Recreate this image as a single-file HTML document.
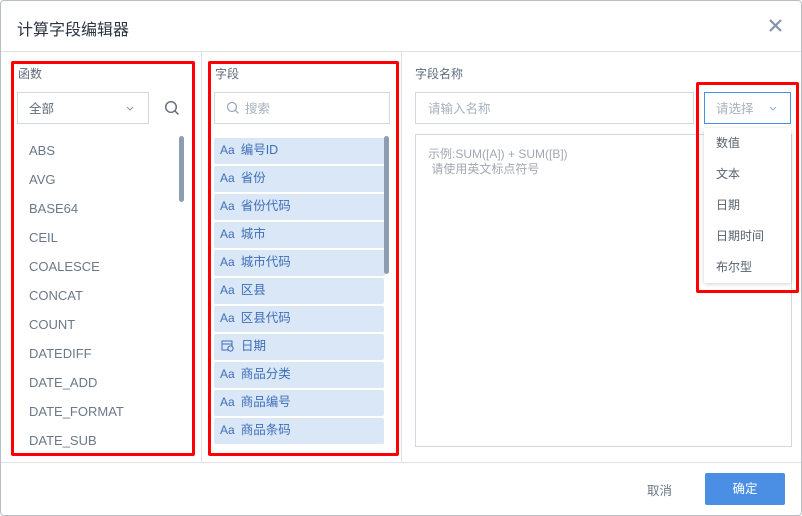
<!DOCTYPE html>
<html><head><meta charset="utf-8"><style>
*{box-sizing:border-box;margin:0;padding:0}
body{width:802px;height:516px;background:#fff;font-family:"Liberation Sans","Noto Sans CJK SC",sans-serif;position:relative;overflow:hidden;color:#5f6b7a}
.a{position:absolute}
.box{position:absolute;border:1px solid #d3d8e0;background:#fff}
.red{position:absolute;border:3px solid #f00;border-radius:2px}
.fn{position:absolute;left:29px;font-size:13px;color:#6b7889}
.fd{position:absolute;left:214px;height:26px;background:#d9e7f7;border-radius:2px;font-size:12.5px;color:#3f6fb8;line-height:25px;padding-left:6px}
.fd b{font-weight:normal;margin-right:6px;font-size:12px}
.opt{position:absolute;left:716px;font-size:12px;color:#56626f}
</style></head><body>
<div class="a" style="left:0;top:0;width:802px;height:516px;border:1px solid #b9bec6;border-radius:4px"></div>
<div class="a" style="left:17px;top:16px;font-size:16px;color:#2c3440">计算字段编辑器</div>
<svg class="a" style="left:768px;top:18px" width="15" height="15"><path d="M2 2L13 13M13 2L2 13" stroke="#8494a8" stroke-width="2.2"/></svg>
<div class="a" style="left:1px;top:51px;width:800px;height:1px;background:#dde1e7"></div>
<div class="a" style="left:201px;top:52px;width:1px;height:410px;background:#dde1e7"></div>
<div class="a" style="left:401px;top:52px;width:1px;height:410px;background:#dde1e7"></div>
<div class="a" style="left:1px;top:462px;width:800px;height:1px;background:#dde1e7"></div>

<div class="a" style="left:18px;top:65px;font-size:12px;color:#5f6b7a">函数</div>
<div class="box" style="left:17px;top:92px;width:132px;height:32px"></div>
<div class="a" style="left:29px;top:98px;font-size:12.5px;color:#5f6b7a">全部</div>
<svg class="a" style="left:126px;top:106px" width="8" height="6"><path d="M1 1L4 4L7 1" stroke="#8a96a5" fill="none"/></svg>
<svg class="a" style="left:164px;top:100px" width="16" height="16"><circle cx="7" cy="7" r="5.3" stroke="#5f6b7a" stroke-width="1.4" fill="none"/><path d="M11 11L14.5 14.5" stroke="#5f6b7a" stroke-width="1.5"/></svg>
<div class="fn" style="top:143px">ABS</div>
<div class="fn" style="top:172px">AVG</div>
<div class="fn" style="top:201px">BASE64</div>
<div class="fn" style="top:230px">CEIL</div>
<div class="fn" style="top:259px">COALESCE</div>
<div class="fn" style="top:288px">CONCAT</div>
<div class="fn" style="top:317px">COUNT</div>
<div class="fn" style="top:346px">DATEDIFF</div>
<div class="fn" style="top:375px">DATE_ADD</div>
<div class="fn" style="top:404px">DATE_FORMAT</div>
<div class="fn" style="top:433px">DATE_SUB</div>
<div class="a" style="left:179px;top:136px;width:5px;height:66px;background:#8e9db0;border-radius:3px"></div>

<div class="a" style="left:215px;top:65px;font-size:12px;color:#5f6b7a">字段</div>
<div class="box" style="left:214px;top:92px;width:176px;height:32px"></div>
<svg class="a" style="left:226px;top:101px" width="14" height="14"><circle cx="6" cy="6" r="4.5" stroke="#9aa5b3" stroke-width="1.2" fill="none"/><path d="M9.5 9.5L12.5 12.5" stroke="#9aa5b3" stroke-width="1.2"/></svg>
<div class="a" style="left:245px;top:98px;font-size:12.5px;color:#a8b1bd">搜索</div>
<div class="fd" style="top:138px;width:171px"><b>Aa</b>编号ID</div>
<div class="fd" style="top:166px;width:171px"><b>Aa</b>省份</div>
<div class="fd" style="top:194px;width:171px"><b>Aa</b>省份代码</div>
<div class="fd" style="top:222px;width:171px"><b>Aa</b>城市</div>
<div class="fd" style="top:250px;width:171px"><b>Aa</b>城市代码</div>
<div class="fd" style="top:278px;width:170px"><b>Aa</b>区县</div>
<div class="fd" style="top:306px;width:170px"><b>Aa</b>区县代码</div>
<div class="fd" style="top:334px;width:170px"><svg width="13" height="13" style="vertical-align:-2px;margin-right:7px;margin-left:1px"><rect x="1" y="2" width="10" height="9" fill="none" stroke="#3f6fb8"/><path d="M1 5H11" stroke="#3f6fb8"/><circle cx="9.5" cy="9.5" r="2.6" fill="#d9e7f7" stroke="#3f6fb8"/></svg>日期</div>
<div class="fd" style="top:362px;width:170px"><b>Aa</b>商品分类</div>
<div class="fd" style="top:390px;width:170px"><b>Aa</b>商品编号</div>
<div class="fd" style="top:418px;width:170px"><b>Aa</b>商品条码</div>
<div class="a" style="left:384px;top:136px;width:5px;height:138px;background:#8e9db0;border-radius:3px"></div>

<div class="a" style="left:415px;top:65px;font-size:12px;color:#5f6b7a">字段名称</div>
<div class="box" style="left:415px;top:92px;width:279px;height:32px"></div>
<div class="a" style="left:428px;top:98px;font-size:12.5px;color:#a8b1bd">请输入名称</div>
<div class="box" style="left:704px;top:92px;width:87px;height:32px;border-color:#4a90e2"></div>
<div class="a" style="left:716px;top:98px;font-size:12.5px;color:#a8b1bd">请选择</div>
<svg class="a" style="left:769px;top:106px" width="8" height="6"><path d="M1 1L4 4L7 1" stroke="#8ab0e0" fill="none"/></svg>
<div class="box" style="left:415px;top:134px;width:377px;height:313px"></div>
<div class="a" style="left:428px;top:147px;font-size:12px;color:#a0a8b3;line-height:15px">示例:SUM([A]) + SUM([B])<br>&nbsp;请使用英文标点符号</div>
<div class="a" style="left:704px;top:128px;width:87px;height:155px;background:#fff;box-shadow:0 1px 4px rgba(0,0,0,.18);border-radius:2px"></div>
<div class="opt" style="top:134px">数值</div>
<div class="opt" style="top:165px">文本</div>
<div class="opt" style="top:196px">日期</div>
<div class="opt" style="top:227px">日期时间</div>
<div class="opt" style="top:258px">布尔型</div>

<div class="red" style="left:11px;top:61px;width:184px;height:395px"></div>
<div class="red" style="left:208px;top:61px;width:191px;height:395px"></div>
<div class="red" style="left:696px;top:82px;width:103px;height:211px"></div>

<div class="a" style="left:647px;top:480px;font-size:12.5px;color:#6b7889">取消</div>
<div class="a" style="left:705px;top:473px;width:80px;height:32px;background:#4a8fe3;border-radius:2px;color:#fff;font-size:12.5px;text-align:center;line-height:32px">确定</div>
</body></html>
